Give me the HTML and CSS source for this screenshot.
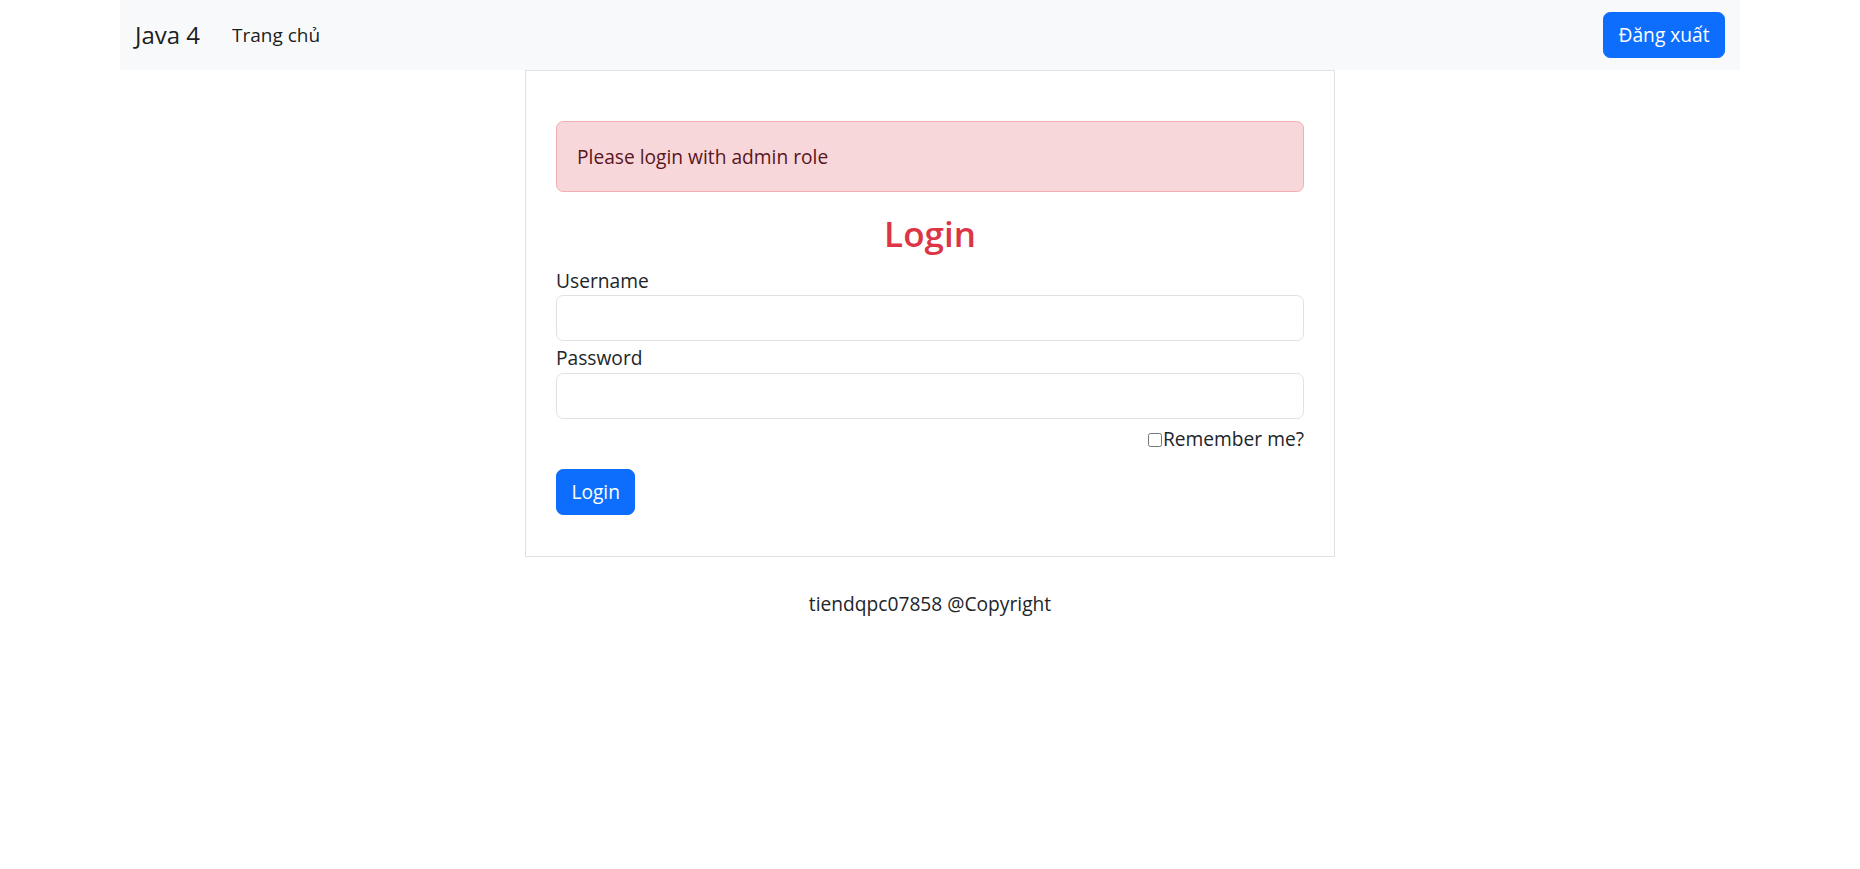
FILE: index.html
```html
<!DOCTYPE html>
<html lang="vi">
<head>
<meta charset="utf-8">
<title>Login</title>
<link rel="stylesheet" href="styles.css">
</head>
<body>
<nav class="navbar">
  <div class="nav-left">
    <a class="brand" href="#">Java 4</a>
    <a class="nav-link" href="#">Trang chủ</a>
  </div>
  <button class="btn btn-primary" type="button">Đăng xuất</button>
</nav>
<main class="card">
  <div class="alert">Please login with admin role</div>
  <h2 class="title">Login</h2>
  <form class="form">
    <label class="label" for="username">Username</label>
    <input class="input" id="username" type="text">
    <label class="label label-next" for="password">Password</label>
    <input class="input" id="password" type="password">
    <div class="remember"><input class="check" type="checkbox" id="remember"><label for="remember">Remember me?</label></div>
    <div class="actions"><button class="btn btn-primary" type="button">Login</button></div>
  </form>
</main>
<footer class="footer">tiendqpc07858 @Copyright</footer>
</body>
</html>
```

FILE: styles.css
```css
* { box-sizing: border-box; }
html, body { margin: 0; padding: 0; }
body {
  font-family: "Open Sans", "Noto Sans", sans-serif;
  font-size: 19.2px;
  line-height: 28.8px;
  color: #212529;
  background: #fff;
}
.navbar {
  width: 1620px;
  height: 70px;
  margin: 0 auto;
  background: #f8f9fa;
  display: flex;
  align-items: center;
  justify-content: space-between;
  padding: 0 15px;
}
.nav-left { display: flex; align-items: center; gap: 32px; }
.brand {
  font-size: 24px;
  color: rgba(0,0,0,.9);
  text-decoration: none;
}
.nav-link {
  font-size: 19px;
  color: rgba(0,0,0,.9);
  text-decoration: none;
}
.btn {
  font-family: inherit;
  font-size: 19.2px;
  line-height: 28.8px;
  padding: 7.2px 14.4px;
  border-radius: 7.2px;
  border: 1px solid transparent;
  height: 46px;
  cursor: pointer;
}
.btn-primary { background: #0d6efd; border-color: #0d6efd; color: #fff; }
.card {
  display: block;
  width: 810px;
  margin: 0 auto;
  border: 1px solid #dee2e6;
  padding: 50px 30px 41px;
}
.alert {
  background: #f8d7da;
  border: 1px solid #f1aeb5;
  color: #58151c;
  border-radius: 7.2px;
  padding: 21px 20px 19px;
  margin-bottom: 19.2px;
}
.title {
  margin: 0 0 9.6px;
  text-align: center;
  color: #dc3545;
  font-size: 35px;
  line-height: 46px;
  font-weight: 600;
}
.form { display: flex; flex-direction: column; }
.label { display: block; }
.label-next { margin-top: 3px; }
.input {
  display: block;
  width: 100%;
  height: 46px;
  border: 1px solid #dee2e6;
  border-radius: 7.2px;
  padding: 7.2px 14.4px;
  font: inherit;
}
.remember {
  margin-top: 6px;
  display: flex;
  justify-content: flex-end;
  align-items: center;
}
.check { margin: 0 1px 0 0; width: 14px; height: 14px; }
.actions { margin-top: 15px; }
.footer {
  text-align: center;
  margin-top: 33px;
}
```
